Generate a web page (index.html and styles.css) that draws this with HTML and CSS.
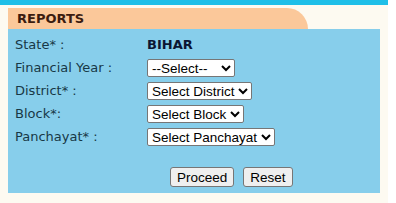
FILE: index.html
```html
<!DOCTYPE html>
<html lang="en">
<head>
  <meta charset="UTF-8">
  <title>Reports</title>
  <link rel="stylesheet" href="styles.css">
</head>
<body>
  <div id="page">
    <div id="topbar"></div>
    <div id="tab">REPORTS</div>
    <div id="panel">
      <div class="row">
        <span class="label">State* :</span>
        <span class="state">BIHAR</span>
      </div>
      <div class="row">
        <span class="label">Financial Year :</span>
        <select class="fy">
          <option>--Select--</option>
        </select>
      </div>
      <div class="row">
        <span class="label">District* :</span>
        <select>
          <option>Select District</option>
        </select>
      </div>
      <div class="row">
        <span class="label">Block*:</span>
        <select>
          <option>Select Block</option>
        </select>
      </div>
      <div class="row">
        <span class="label">Panchayat* :</span>
        <select>
          <option>Select Panchayat</option>
        </select>
      </div>
      <div class="buttons">
        <button>Proceed</button>
        <button>Reset</button>
      </div>
    </div>
  </div>
</body>
</html>
```

FILE: styles.css
```css
body {
  margin: 0;
  background-color: #fff;
  font-family: 'DejaVu Sans', Verdana, sans-serif;
}
#page {
  width: 388px;
  height: 203px;
  background-color: #fdfaf1;
}
#topbar {
  height: 5px;
  background-color: #1fbfe8;
}
#tab {
  margin: 3px 0 0 8px;
  width: 291px;
  height: 21px;
  padding-left: 9px;
  background-color: #fbc89a;
  border-top-right-radius: 22px;
  font-size: 13px;
  font-weight: bold;
  line-height: 21px;
  color: #3b1c10;
}
#panel {
  margin-left: 8px;
  width: 372px;
  height: 160px;
  padding-top: 4px;
  background-color: #87ceeb;
}
.row {
  display: flex;
  align-items: center;
  height: 23px;
  padding-left: 7px;
}
.label {
  width: 132px;
  font-size: 13px;
  color: #173846;
}
.state {
  font-size: 13px;
  font-weight: bold;
  color: #0b1633;
}
select {
  height: 18px;
  padding: 0;
  border: 1px solid #767676;
  border-radius: 2px;
  background-color: #fff;
  font-family: 'Liberation Sans', Arial, sans-serif;
  font-size: 13.5px;
  color: #000;
}
select.fy {
  width: 88px;
}
.buttons {
  display: flex;
  gap: 9px;
  padding: 19px 0 0 162px;
}
button {
  height: 20px;
  padding: 0 6px;
  border: 1px solid #767676;
  border-radius: 3px;
  background-color: #efefef;
  font-family: 'Liberation Sans', Arial, sans-serif;
  font-size: 13.5px;
  color: #000;
}
```
